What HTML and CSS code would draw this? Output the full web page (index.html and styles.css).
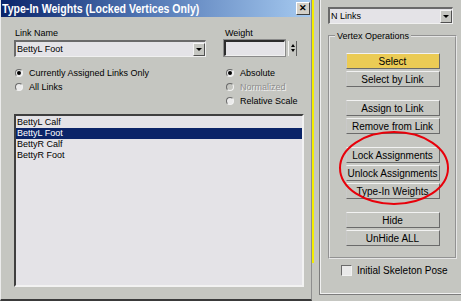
FILE: index.html
```html
<!DOCTYPE html>
<html>
<head>
    <title>Type-In Weights</title>
    <link rel="stylesheet" href="styles.css">
</head>
<body>
<div class="screen">
    <div class="dialog">
        <div class="titlebar">
            <span class="title">Type-In Weights (Locked Vertices Only)</span>
            <span class="close">&#x2715;</span>
        </div>
        <div class="dialog-body">
            <div class="top-row">
                <div class="field link-field">
                    <div class="label">Link Name</div>
                    <div class="combo">
                        <span class="combo-text">BettyL Foot</span>
                        <span class="combo-arrow"></span>
                    </div>
                </div>
                <div class="field weight-field">
                    <div class="label">Weight</div>
                    <div class="weight-row">
                        <div class="edit"></div>
                        <div class="spinner">
                            <span class="tri up"></span>
                            <span class="tri down"></span>
                        </div>
                    </div>
                </div>
            </div>
            <div class="options">
                <div class="radio-group left">
                    <div class="radio checked"><span class="dot"></span>Currently Assigned Links Only</div>
                    <div class="radio"><span class="dot"></span>All Links</div>
                </div>
                <div class="radio-group right">
                    <div class="radio checked"><span class="dot"></span>Absolute</div>
                    <div class="radio disabled"><span class="dot"></span>Normalized</div>
                    <div class="radio"><span class="dot"></span>Relative Scale</div>
                </div>
            </div>
            <ul class="listbox">
                <li>BettyL Calf</li>
                <li class="selected">BettyL Foot</li>
                <li>BettyR Calf</li>
                <li>BettyR Foot</li>
            </ul>
        </div>
    </div>

    <div class="divider"></div>

    <div class="panel">
        <div class="frame">
            <div class="frame-inner">
                <div class="combo blend">
                    <span class="combo-text">N Links</span>
                    <span class="combo-arrow"></span>
                </div>
                <fieldset class="group">
                    <legend>Vertex Operations</legend>
                    <div class="btn-set">
                        <button class="btn active">Select</button>
                        <button class="btn">Select by Link</button>
                    </div>
                    <div class="btn-set">
                        <button class="btn">Assign to Link</button>
                        <button class="btn">Remove from Link</button>
                    </div>
                    <div class="btn-set">
                        <button class="btn">Lock Assignments</button>
                        <button class="btn">Unlock Assignments</button>
                        <button class="btn">Type-In Weights</button>
                    </div>
                    <div class="btn-set">
                        <button class="btn">Hide</button>
                        <button class="btn">UnHide ALL</button>
                    </div>
                </fieldset>
                <div class="check"><span class="box"></span>Initial Skeleton Pose</div>
            </div>
        </div>
    </div>

    <!-- red marker drawn over the screenshot -->
    <svg class="markup" width="461" height="301" viewBox="0 0 461 301">
        <ellipse cx="394" cy="168" rx="54" ry="36" fill="none" stroke="#e8000a" stroke-width="2"/>
    </svg>
</div>
</body>
</html>
```

FILE: styles.css
```css
body {
    margin: 0;
    font-family: "Liberation Sans", Arial, sans-serif;
    color: #000;
}

.screen {
    position: relative;
    display: flex;
    width: 461px;
    height: 301px;
    overflow: hidden;
    background-color: #c5c6c1;
}

/* dialog */

.dialog {
    width: 312px;
    height: 301px;
    box-sizing: border-box;
    border-left: 1px solid #ececec;
    border-right: 1px solid #8e8e8e;
    border-bottom: 2px solid #3a3a3a;
    flex-shrink: 0;
}

.titlebar {
    display: flex;
    align-items: center;
    justify-content: space-between;
    height: 17px;
    padding: 0 1px 0 1px;
    background: linear-gradient(to right, #0a246a 0%, #4f74b2 45%, #a6caf0 100%);
}

.title {
    color: #fff;
    font-weight: bold;
    font-size: 12px;
    white-space: nowrap;
    transform: scaleX(0.88);
    transform-origin: left center;
}

.close {
    width: 14px;
    height: 13px;
    box-sizing: border-box;
    border-top: 1px solid #fff;
    border-left: 1px solid #fff;
    border-right: 1px solid #404040;
    border-bottom: 1px solid #404040;
    background-color: #d4d0c8;
    font-size: 9px;
    font-weight: bold;
    line-height: 11px;
    text-align: center;
}

.dialog-body {
    padding: 11px 6px 0 13px;
}

.top-row {
    display: flex;
}

.label {
    height: 11px;
    line-height: 11px;
    margin-bottom: 1px;
    padding-left: 1px;
    font-size: 9px;
}

.link-field {
    width: 192px;
}

.weight-field {
    margin-left: 18px;
}

.combo {
    display: flex;
    align-items: center;
    justify-content: space-between;
    height: 17px;
    box-sizing: border-box;
    border-top: 2px solid #6a6a6a;
    border-left: 2px solid #6a6a6a;
    border-right: 1px solid #f0f0f0;
    border-bottom: 1px solid #f0f0f0;
    background-color: #e4e3e7;
    font-size: 9px;
}

.combo-text {
    padding-left: 1px;
    white-space: nowrap;
}

.combo-arrow {
    position: relative;
    width: 12px;
    height: 13px;
    box-sizing: border-box;
    border-top: 1px solid #f4f4f4;
    border-left: 1px solid #f4f4f4;
    border-right: 1px solid #505050;
    border-bottom: 1px solid #505050;
    background-color: #c5c6c1;
}

.combo-arrow::after {
    content: "";
    position: absolute;
    left: 2px;
    top: 4px;
    border-left: 3px solid transparent;
    border-right: 3px solid transparent;
    border-top: 3px solid #000;
}

.weight-row {
    display: flex;
    align-items: center;
}

.edit {
    width: 61px;
    height: 16px;
    box-sizing: border-box;
    border-top: 2px solid #2c2c2c;
    border-left: 2px solid #2c2c2c;
    border-right: 1px solid #f0f0f0;
    border-bottom: 1px solid #f0f0f0;
    outline: 1px solid #8a8a8a;
    background-color: #e4e3e7;
}

.spinner {
    display: flex;
    flex-direction: column;
    align-items: center;
    justify-content: center;
    gap: 2px;
    width: 9px;
    height: 15px;
    margin-left: 3px;
    box-sizing: border-box;
    border-left: 1px solid #f4f4f4;
    border-right: 1px solid #606060;
    background-color: #c5c6c1;
}

.tri {
    width: 0;
    height: 0;
    border-left: 2px solid transparent;
    border-right: 2px solid transparent;
}

.tri.up {
    border-bottom: 3px solid #000;
}

.tri.down {
    border-top: 3px solid #000;
}

.options {
    display: flex;
    margin-top: 9px;
}

.radio-group.left {
    width: 211px;
    padding-left: 1px;
}

.radio {
    display: flex;
    align-items: center;
    height: 14px;
    font-size: 9px;
    white-space: nowrap;
}

.dot {
    position: relative;
    width: 8px;
    height: 8px;
    margin-right: 6px;
    box-sizing: border-box;
    border-radius: 50%;
    border: 1px solid;
    border-color: #6a6a6a #f2f2f2 #f2f2f2 #6a6a6a;
    background-color: #ebebeb;
}

.radio.checked .dot::after {
    content: "";
    position: absolute;
    left: 1px;
    top: 1px;
    width: 4px;
    height: 4px;
    border-radius: 50%;
    background-color: #000;
}

.radio.disabled {
    color: #8e8e8e;
    text-shadow: 1px 1px 0 #f4f4f4;
}

.radio.disabled .dot {
    background-color: #c5c6c1;
}

.listbox {
    list-style: none;
    width: 290px;
    height: 173px;
    margin: 6px 0 0 0;
    padding: 1px 0 0 0;
    box-sizing: border-box;
    border-top: 2px solid #3f3f3f;
    border-left: 2px solid #3f3f3f;
    border-right: 2px solid #f2f2f2;
    border-bottom: 2px solid #f2f2f2;
    background-color: #e4e3e7;
    font-size: 9px;
}

.listbox li {
    height: 11px;
    line-height: 11px;
    padding-left: 1px;
    white-space: nowrap;
}

.listbox li.selected {
    background-color: #0b2468;
    color: #fff;
}

/* command panel */

.divider {
    width: 2px;
    height: 263px;
    background-color: #f4ee00;
    flex-shrink: 0;
}

.panel {
    flex: 1;
    padding-left: 5px;
}

.frame {
    height: 295px;
    box-sizing: border-box;
    border-left: 1px solid #7c7c7c;
    border-bottom: 1px solid #7c7c7c;
}

.frame-inner {
    height: 100%;
    box-sizing: border-box;
    border-left: 1px solid #f0f0f0;
    border-bottom: 1px solid #f0f0f0;
    padding: 7px 0 0 7px;
}

.combo.blend {
    width: 125px;
}

.group {
    width: 129px;
    margin: 7px 0 0 0;
    padding: 12px 0 11px 0;
    box-sizing: border-box;
    border: 2px groove #e6e6e6;
}

.group legend {
    margin-left: 5px;
    padding: 0 2px;
    font-size: 9px;
}

.btn-set + .btn-set {
    margin-top: 13px;
}

.btn {
    display: block;
    width: 94px;
    height: 16px;
    margin: 0 auto;
    padding: 0;
    box-sizing: border-box;
    border: 1px solid;
    border-color: #f2f2f2 #6a6a6a #6a6a6a #c9c9c9;
    background-color: #c5c6c1;
    font-family: "Liberation Sans", Arial, sans-serif;
    font-size: 10px;
    color: #000;
}

.btn + .btn {
    margin-top: 2px;
}

.btn.active {
    background-color: #ebcb55;
}

.check {
    display: flex;
    align-items: center;
    margin: 6px 0 0 13px;
    font-size: 10px;
}

.box {
    width: 11px;
    height: 11px;
    margin-right: 5px;
    box-sizing: border-box;
    border-top: 1px solid #6a6a6a;
    border-left: 1px solid #6a6a6a;
    border-right: 1px solid #f2f2f2;
    border-bottom: 1px solid #f2f2f2;
    background-color: #e9e9e9;
}

.markup {
    position: absolute;
    left: 0;
    top: 0;
    pointer-events: none;
}
```
